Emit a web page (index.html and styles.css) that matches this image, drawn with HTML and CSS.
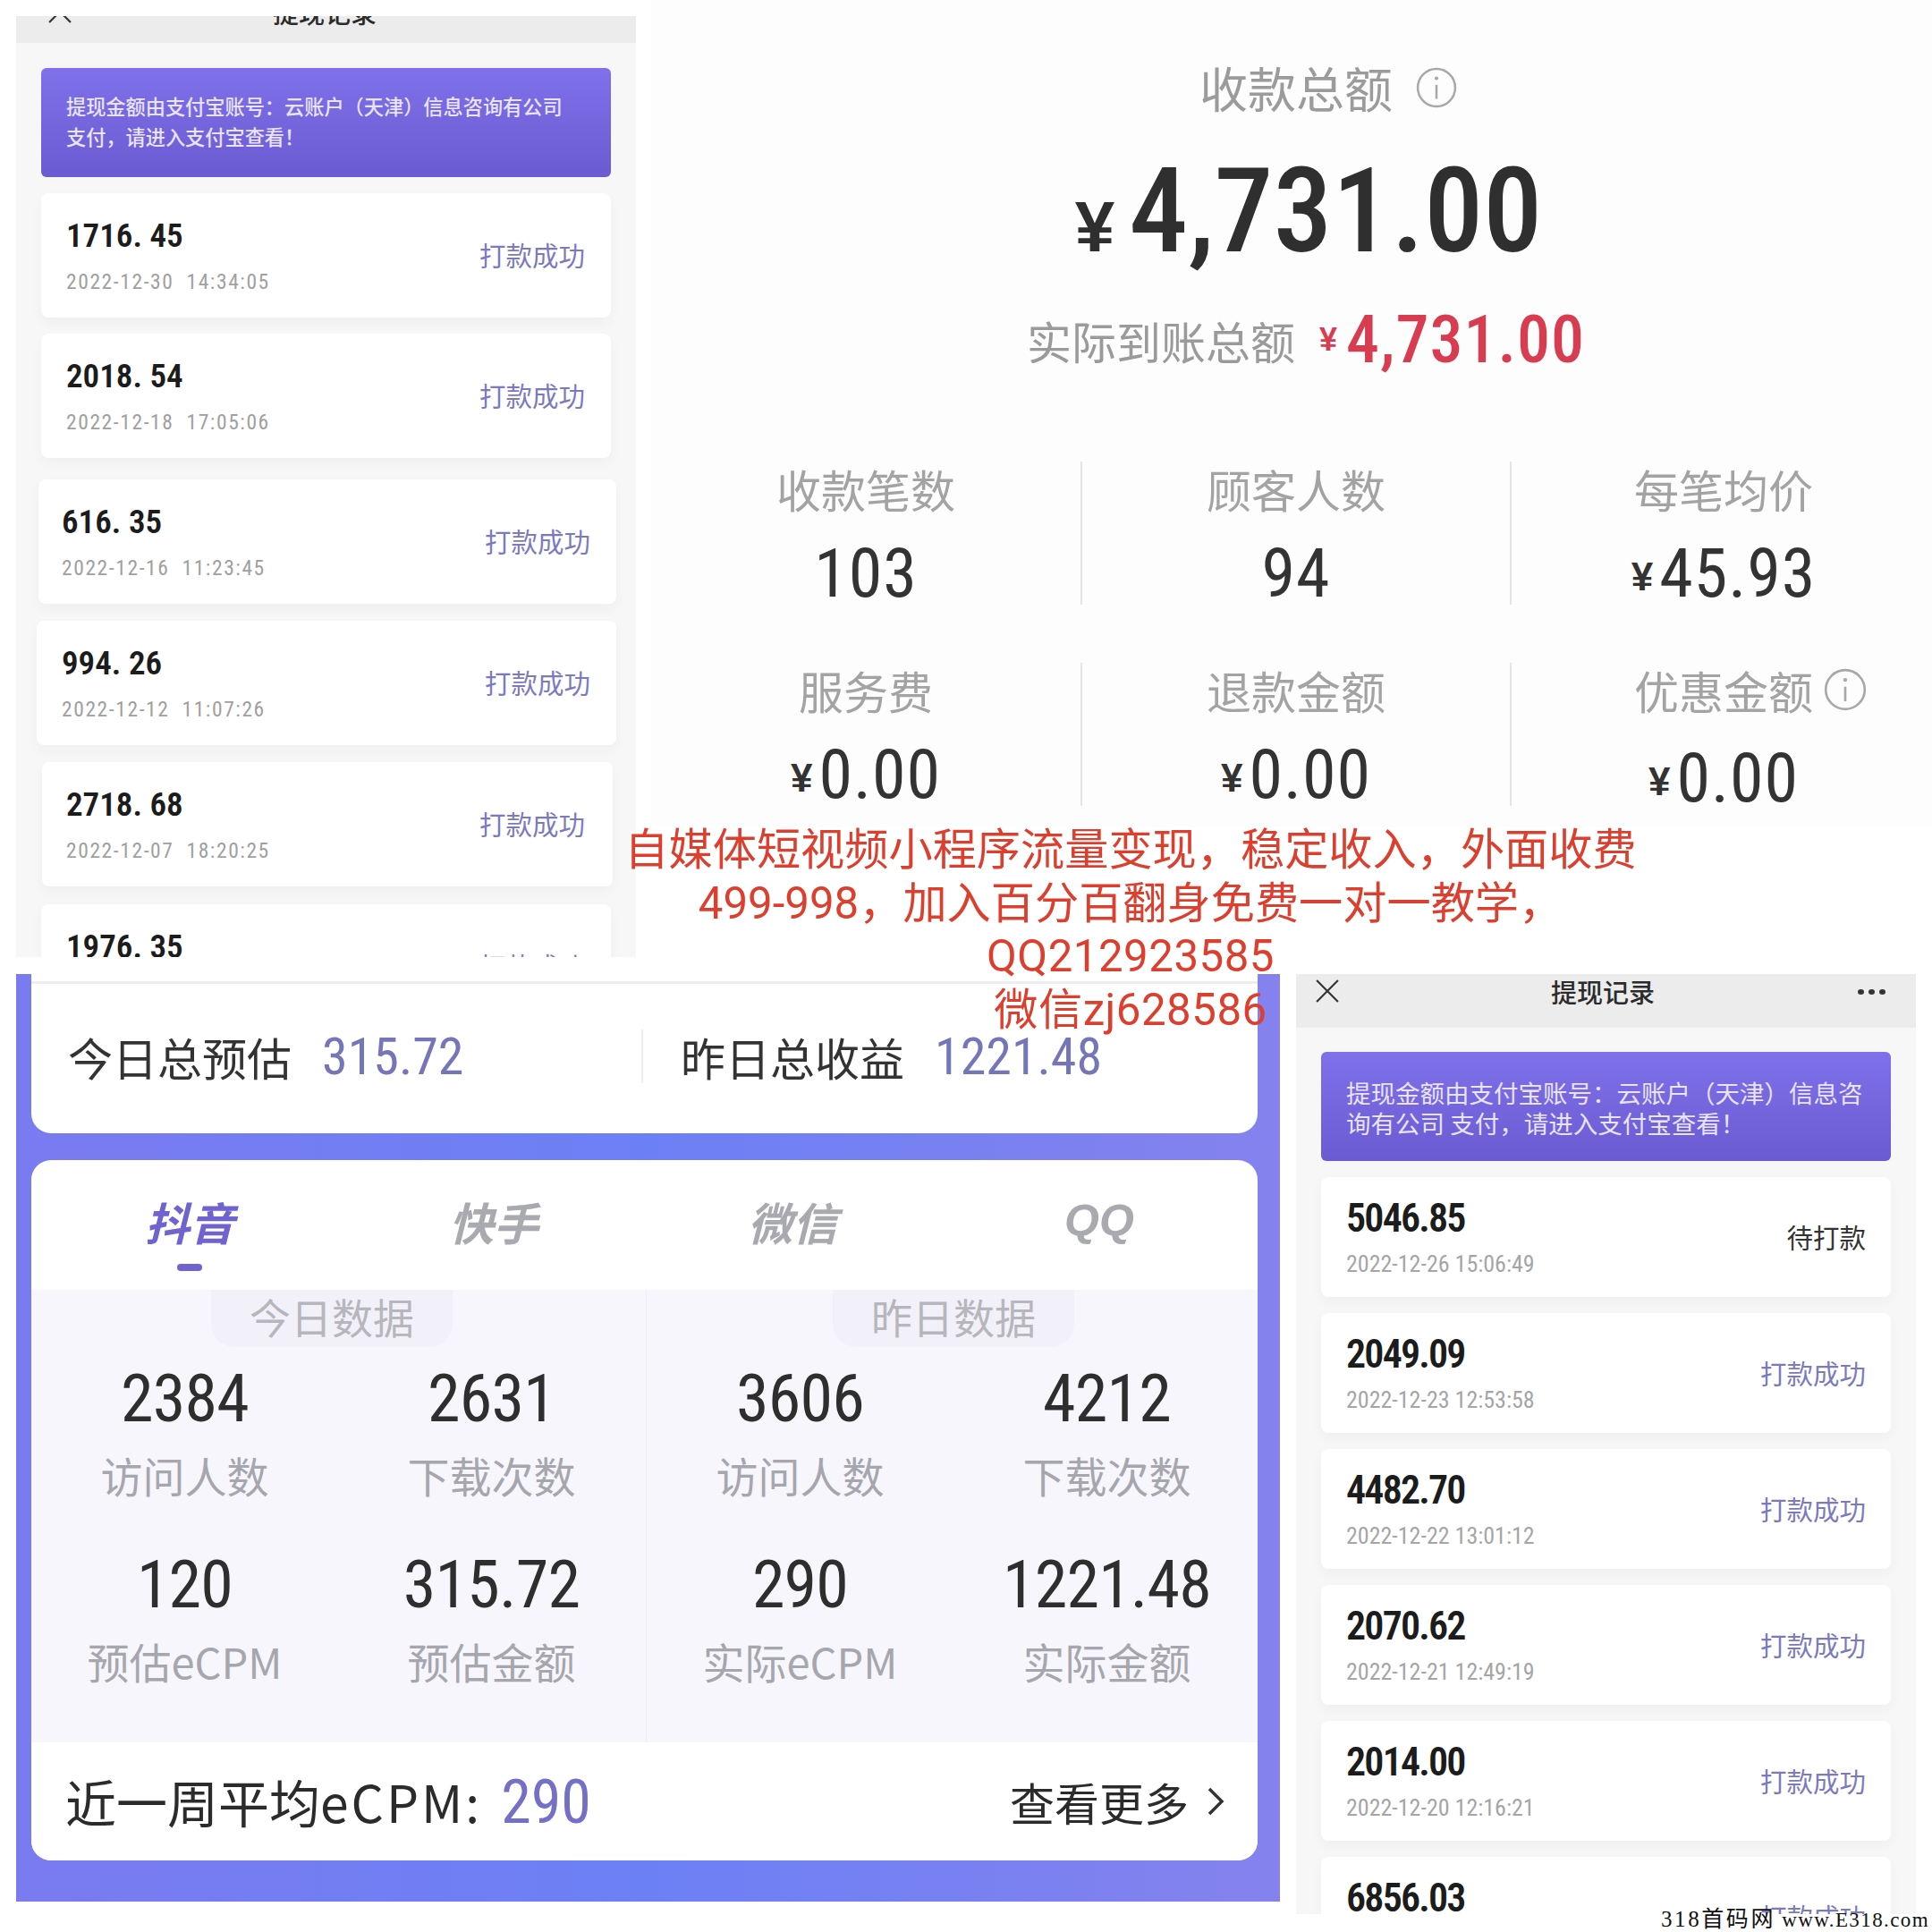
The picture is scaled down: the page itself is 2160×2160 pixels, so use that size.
FILE: index.html
```html
<!DOCTYPE html>
<html lang="zh">
<head>
<meta charset="utf-8">
<title>收益截图拼图</title>
<link rel="stylesheet" href="styles.css">
</head>
<body>
<div class="canvas">

  <section class="shot records records-left">
    <header class="rec-head rec-head-clipped">
      <svg class="rec-x" viewBox="0 0 24 24"><path d="M1 1 23 23M23 1 1 23"/></svg>
      <span class="rec-title">提现记录</span>
      <span class="rec-more"></span>
    </header>
    <div class="rec-body">
      <div class="rec-banner rec-banner-old">提现金额由支付宝账号：云账户（天津）信息咨询有公司<br>支付，请进入支付宝查看！</div>
      <div class="rec-card"><div><div class="rec-amt">1716. 45</div><div class="rec-date date-old">2022-12-30&nbsp; 14:34:05</div></div><div class="rec-status">打款成功</div></div>
      <div class="rec-card"><div><div class="rec-amt">2018. 54</div><div class="rec-date date-old">2022-12-18&nbsp; 17:05:06</div></div><div class="rec-status">打款成功</div></div>
      <div class="rec-card card-c"><div><div class="rec-amt">616. 35</div><div class="rec-date date-old">2022-12-16&nbsp; 11:23:45</div></div><div class="rec-status">打款成功</div></div>
      <div class="rec-card card-d"><div><div class="rec-amt">994. 26</div><div class="rec-date date-old">2022-12-12&nbsp; 11:07:26</div></div><div class="rec-status">打款成功</div></div>
      <div class="rec-card card-e"><div><div class="rec-amt">2718. 68</div><div class="rec-date date-old">2022-12-07&nbsp; 18:20:25</div></div><div class="rec-status">打款成功</div></div>
      <div class="rec-card"><div><div class="rec-amt">1976. 35</div><div class="rec-date date-old">2022-12-05&nbsp; 10:12:31</div></div><div class="rec-status">打款成功</div></div>
    </div>
  </section>

  <section class="shot totals">
    <div class="tot-title">收款总额
      <svg class="info info-lg" viewBox="0 0 44 44"><circle cx="22" cy="22" r="20"/><path d="M22 19v15"/><circle class="info-dot" cx="22" cy="12" r="2"/></svg>
    </div>
    <div class="tot-main"><span class="yen yen-xl">¥</span><span class="tot-num">4,731.00</span></div>
    <div class="tot-sub"><span class="tot-sub-label">实际到账总额</span><span class="yen yen-red">¥</span><span class="tot-sub-num">4,731.00</span></div>
    <div class="tot-grid">
      <div class="tot-cell"><div class="tot-label">收款笔数</div><div class="tot-val">103</div></div>
      <div class="tot-cell tot-cell-line"><div class="tot-label">顾客人数</div><div class="tot-val">94</div></div>
      <div class="tot-cell tot-cell-line"><div class="tot-label">每笔均价</div><div class="tot-val"><span class="yen yen-sm">¥</span>45.93</div></div>
      <div class="tot-cell"><div class="tot-label">服务费</div><div class="tot-val"><span class="yen yen-sm">¥</span>0.00</div></div>
      <div class="tot-cell tot-cell-line"><div class="tot-label">退款金额</div><div class="tot-val"><span class="yen yen-sm">¥</span>0.00</div></div>
      <div class="tot-cell tot-cell-line"><div class="tot-label tot-label-info">优惠金额<svg class="info info-sm" viewBox="0 0 44 44"><circle cx="22" cy="22" r="20"/><path d="M22 19v15"/><circle class="info-dot" cx="22" cy="12" r="2"/></svg></div><div class="tot-val tot-val-low"><span class="yen yen-sm">¥</span>0.00</div></div>
    </div>
  </section>

  <section class="shot earn">
    <div class="earn-top">
      <div class="earn-rule"></div>
      <div class="earn-sum">
        <div class="earn-half earn-half-l">今日总预估<span class="earn-num">315.72</span></div>
        <div class="earn-half earn-half-r">昨日总收益<span class="earn-num">1221.48</span></div>
      </div>
    </div>
    <div class="earn-main">
      <nav class="tabs">
        <div class="tab tab-on">抖音<i class="tab-bar"></i></div>
        <div class="tab">快手</div>
        <div class="tab">微信</div>
        <div class="tab tab-latin">QQ</div>
      </nav>
      <div class="data">
        <div class="data-col">
          <div class="data-pill">今日数据</div>
          <div class="data-grid">
            <div class="stat"><div class="stat-val">2384</div><div class="stat-label">访问人数</div></div>
            <div class="stat"><div class="stat-val">2631</div><div class="stat-label">下载次数</div></div>
            <div class="stat"><div class="stat-val">120</div><div class="stat-label">预估eCPM</div></div>
            <div class="stat"><div class="stat-val">315.72</div><div class="stat-label">预估金额</div></div>
          </div>
        </div>
        <div class="data-col data-col-r">
          <div class="data-pill">昨日数据</div>
          <div class="data-grid">
            <div class="stat"><div class="stat-val">3606</div><div class="stat-label">访问人数</div></div>
            <div class="stat"><div class="stat-val">4212</div><div class="stat-label">下载次数</div></div>
            <div class="stat"><div class="stat-val">290</div><div class="stat-label">实际eCPM</div></div>
            <div class="stat"><div class="stat-val">1221.48</div><div class="stat-label">实际金额</div></div>
          </div>
        </div>
      </div>
      <footer class="earn-foot">
        <div class="foot-left">近一周平均<span class="foot-latin">eCPM:</span><span class="foot-num">290</span></div>
        <div class="foot-right">查看更多<svg class="chev" viewBox="0 0 20 32"><path d="M3 2 17 16 3 30"/></svg></div>
      </footer>
    </div>
  </section>

  <section class="shot records records-right">
    <header class="rec-head">
      <svg class="rec-x" viewBox="0 0 24 24"><path d="M1 1 23 23M23 1 1 23"/></svg>
      <span class="rec-title">提现记录</span>
      <span class="rec-more"><i></i><i></i><i></i></span>
    </header>
    <div class="rec-body">
      <div class="rec-banner">提现金额由支付宝账号：云账户（天津）信息咨<br>询有公司 支付，请进入支付宝查看！</div>
      <div class="rec-card"><div><div class="rec-amt">5046.85</div><div class="rec-date">2022-12-26 15:06:49</div></div><div class="rec-status rec-status-wait">待打款</div></div>
      <div class="rec-card"><div><div class="rec-amt">2049.09</div><div class="rec-date">2022-12-23 12:53:58</div></div><div class="rec-status">打款成功</div></div>
      <div class="rec-card"><div><div class="rec-amt">4482.70</div><div class="rec-date">2022-12-22 13:01:12</div></div><div class="rec-status">打款成功</div></div>
      <div class="rec-card"><div><div class="rec-amt">2070.62</div><div class="rec-date">2022-12-21 12:49:19</div></div><div class="rec-status">打款成功</div></div>
      <div class="rec-card"><div><div class="rec-amt">2014.00</div><div class="rec-date">2022-12-20 12:16:21</div></div><div class="rec-status">打款成功</div></div>
      <div class="rec-card"><div><div class="rec-amt">6856.03</div><div class="rec-date">2022-12-19 12:02:44</div></div><div class="rec-status">打款成功</div></div>
    </div>
  </section>

  <div class="promo">
    <div>自媒体短视频小程序流量变现，稳定收入，外面收费</div>
    <div>499-998，加入百分百翻身免费一对一教学，</div>
    <div class="promo-latin">QQ212923585</div>
    <div class="promo-latin">微信zj628586</div>
  </div>

  <div class="mark"><span class="mark-cn">318首码网</span> www.E318.com</div>
</div>
</body>
</html>
```
FILE: styles.css
```css
* { box-sizing: border-box; }
html, body { margin: 0; padding: 0; background: #fff; }
body { font-family: "Noto Sans CJK SC", sans-serif; }

.canvas { position: relative; width: 2160px; height: 2160px; overflow: hidden; background: #fff; }
.shot { position: absolute; overflow: hidden; }

/* condensed figures used across all screenshots */
.rec-amt, .rec-date, .tot-num, .tot-sub-num, .tot-val, .earn-num, .stat-val, .foot-num {
  font-family: Roboto, "Liberation Sans", sans-serif;
  font-stretch: 75%;
}

/* ---------- withdrawal record screenshots ---------- */
.records { width: 693px; background: #f7f7f8; }
.records-left { left: 18px; top: 18px; height: 1052px; }
.records-right { left: 1449px; top: 1089px; height: 1051px; }

.rec-head {
  display: flex; justify-content: space-between; align-items: flex-start;
  height: 60px; padding: 1px 33px 0 22px; background: #ececec;
}
.rec-head-clipped { height: 54px; margin-top: -24px; padding-left: 36px; }
.rec-x { width: 26px; height: 26px; margin: 5px 10px 0 0; fill: none; stroke: #333; stroke-width: 2; }
.rec-head-clipped .rec-x { margin-right: 0; }
.rec-title { font-size: 29px; line-height: 36px; color: #2b2b2b; font-weight: 500; }
.rec-more { display: flex; gap: 5px; width: 32px; margin-top: 16px; }
.rec-more i { width: 7px; height: 6px; border-radius: 50%; background: #333; }

.rec-body { padding: 27px 28px 0; display: flex; flex-direction: column; gap: 18px; }
.records-left .rec-body { padding-top: 28px; }
.rec-banner {
  height: 122px; padding: 28px 28px 0;
  border-radius: 6px; color: #e9e4fb; font-size: 27.5px; line-height: 34px;
  background: linear-gradient(180deg, #7f71ea 0%, #6b5bd2 100%);
}
.rec-banner-old { padding-top: 25px; font-size: 22.2px; line-height: 34px; font-weight: 500; }

.rec-card {
  display: flex; justify-content: space-between; align-items: center;
  height: 134px; flex: none; padding: 0 28px 0 28px;
  border-radius: 8px; background: #fff;
  box-shadow: 0 6px 14px rgba(0, 0, 0, .035);
}
.records-left .rec-card { height: 139px; padding-right: 29px; }
.records-left .card-c { margin: 6px -6px 0 -3px; padding-right: 29px; padding-left: 26px; }
.records-left .card-d { margin: 1px -6px 0 -5px; padding-right: 29px; }
.records-left .card-e { margin: 1px -2px 0 1px; padding-right: 31px; padding-left: 27px; }
.records-left .card-e + .rec-card { margin-top: 2px; }

.rec-amt { font-weight: 600; font-size: 44px; line-height: 46px; letter-spacing: -1.8px; color: #1c1c1c; }
.rec-date { margin-top: 13px; font-size: 26px; line-height: 30px; color: #a5a5a5; }
.records-left .rec-amt { font-size: 37px; letter-spacing: 0; }
.date-old { font-size: 23.5px; letter-spacing: 1.6px; color: #a0a0a0; }
.rec-status { margin-top: -3px; font-size: 29.5px; line-height: 36px; color: #7c7abf; }
.rec-status-wait { color: #333; }

/* ---------- totals screenshot ---------- */
.totals { left: 728px; top: 0; width: 1432px; height: 925px; background: #fdfdfd; }
.tot-title {
  display: flex; justify-content: center; align-items: center; gap: 26px;
  height: 60px; margin: 68px 0 0 82px;
  font-size: 54px; line-height: 60px; color: #9b9b9b;
}
.info { fill: none; stroke: #a8a8a8; flex: none; }
.info-dot { fill: #a8a8a8; stroke: none; }
.info path, .info circle:first-child { stroke-width: 2.4; }
.info-lg { width: 46px; height: 46px; }
.info-sm { width: 48px; height: 48px; position: absolute; left: 100%; top: 6px; margin-left: 12px; }

.yen { font-family: "Liberation Sans", sans-serif; font-weight: 700; }
.yen-xl { font-size: 80px; color: #2f2f2f; margin-right: 16px; }
.yen-red { font-size: 36px; color: #d83c50; margin: 0 10px 0 27px; }
.yen-sm { font-size: 44px; color: #333; margin-right: 6px; vertical-align: 7px; }

.tot-main {
  display: flex; justify-content: center; align-items: baseline;
  height: 130px; margin: 43px 0 0 38px;
  line-height: 130px;
}
.tot-num { font-size: 132px; font-weight: 500; color: #2f2f2f; }
.tot-sub {
  display: flex; justify-content: center; align-items: center;
  height: 72px; margin: 43px 0 0 32px; line-height: 72px;
}
.tot-sub-label { font-size: 50px; color: #9a9a9a; }
.tot-sub-num { font-size: 74px; font-weight: 500; color: #d83c50; letter-spacing: 1px; }

.tot-grid {
  display: grid; grid-template-columns: 480px 480px 476px; grid-auto-rows: 160px;
  row-gap: 65px; margin-top: 100px;
}
.tot-cell { display: flex; flex-direction: column; align-items: center; }
.tot-cell-line { border-left: 2px solid #e4e4e4; }
.tot-label { position: relative; font-size: 50px; line-height: 60px; color: #a3a3a3; }
.tot-val { margin-top: 25px; font-size: 76px; font-weight: 400; line-height: 80px; color: #333; letter-spacing: 1px; }
.tot-val-low { margin-top: 29px; }

/* ---------- earnings screenshot ---------- */
.earn {
  left: 18px; top: 1089px; width: 1413px; height: 1037px; padding: 0 25px 0 17px;
  background: linear-gradient(90deg, #7a7bf0 0%, #6c80f5 50%, #8582ee 100%);
}
.earn-top {
  height: 178px; margin-bottom: 30px; background: #fff;
  border-radius: 0 0 22px 22px;
}
.earn-rule { height: 3px; position: relative; top: 8px; background: #eeeeee; }
.earn-sum { display: flex; padding-top: 59px; }
.earn-half { display: flex; align-items: center; height: 60px; font-size: 50px; color: #333; white-space: nowrap; }
.earn-half-l { width: 684px; padding-left: 41px; border-right: 2px solid #eeeef5; }
.earn-half-r { padding-left: 42px; }
.earn-num { margin-left: 34px; font-size: 58px; color: #7476b8; }

.earn-main { height: 783px; background: #fff; border-radius: 22px; overflow: hidden; }
.tabs { display: grid; grid-template-columns: 342px 338px 330px 356px; height: 145px; padding: 38px 0 0 6px; }
.tab {
  display: flex; flex-direction: column; align-items: center;
  font-size: 50px; line-height: 60px; font-weight: 700; font-style: italic; color: #a9a9b0;
}
.tab-on { color: #6f63cf; }
.tab-latin { font-family: "Liberation Sans", sans-serif; }
.tab-bar { display: block; width: 28px; height: 8px; margin-top: 18px; border-radius: 4px; background: #6f63cf; }

.data { display: grid; grid-template-columns: 687px 684px; height: 506px; background: #f7f6fd; }
.data-col-r { border-left: 1px solid #efeef7; }
.data-pill {
  width: 270px; height: 64px; margin-left: 201px; border-radius: 0 0 26px 26px;
  text-align: center; font-size: 46px; line-height: 59px; color: #b6b6bc; background: #f2f1f9;
}
.data-col-r .data-pill { margin-left: 208px; }
.data-grid { display: grid; grid-template-columns: repeat(2, 343px); row-gap: 53px; margin-top: 18px; }
.stat { text-align: center; }
.stat-val { font-size: 74px; line-height: 80px; letter-spacing: -.8px; color: #2e2e2e; }
.stat-label { margin-top: 15px; font-size: 47px; line-height: 60px; color: #a6a6ae; white-space: nowrap; }

.earn-foot {
  display: flex; justify-content: space-between; align-items: center;
  height: 132px; padding: 0 37px 0 38px; background: #fff;
}
.foot-left { display: flex; align-items: center; padding-bottom: 3px; font-size: 57px; color: #2b2b2b; white-space: nowrap; }
.foot-latin { letter-spacing: 3px; }
.foot-num { margin: 4px 0 0 21px; font-size: 68px; color: #7470c8; }
.foot-right { display: flex; align-items: center; gap: 20px; font-size: 50px; color: #2b2b2b; }
.chev { width: 20px; height: 32px; fill: none; stroke: #333; stroke-width: 3.5; }

/* ---------- overlays ---------- */
.promo {
  position: absolute; left: 660px; top: 921px; width: 1208px;
  text-align: center; white-space: nowrap;
  font-family: Roboto, "Noto Sans CJK SC", sans-serif;
  font-size: 49.2px; line-height: 59.5px; color: #dd3f2f;
}
.promo-latin { letter-spacing: .5px; }
.mark {
  position: absolute; right: 3px; top: 2131px; white-space: pre;
  font-family: "Liberation Serif", "Noto Sans CJK SC", serif;
  font-size: 23px; line-height: 30px; letter-spacing: 1.4px; color: #111;
}
.mark-cn { font-size: 25px; letter-spacing: 2.6px; }
```
